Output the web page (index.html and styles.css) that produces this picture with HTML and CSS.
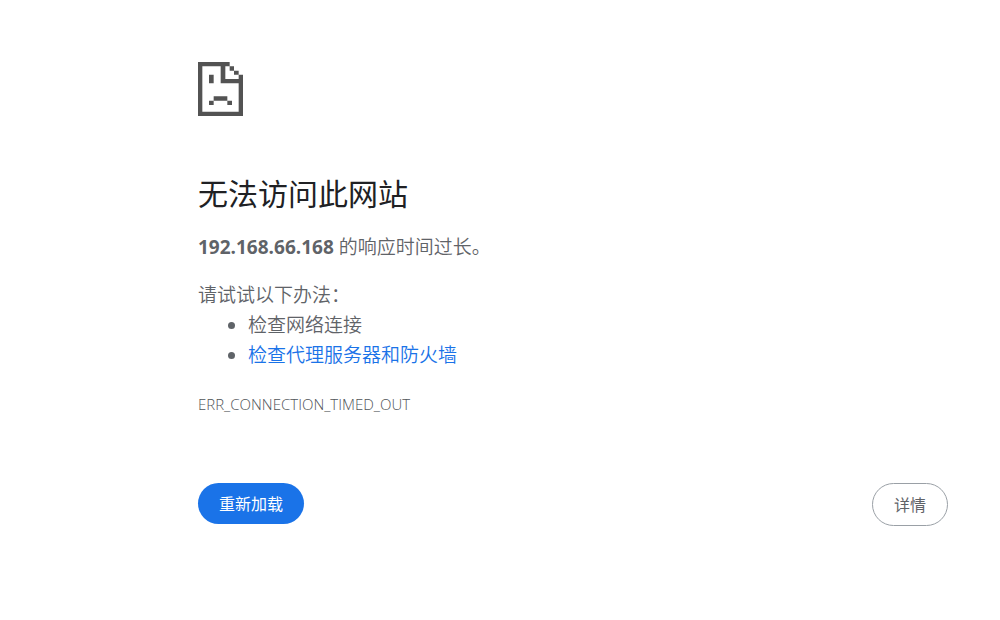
FILE: index.html
```html
<!DOCTYPE html>
<html lang="zh-CN">
<head>
<meta charset="utf-8">
<meta name="viewport" content="width=device-width, initial-scale=1">
<title>192.168.66.168</title>
<link rel="stylesheet" href="styles.css">
</head>
<body>
<main class="error-page">
  <svg class="error-icon" viewBox="0 0 135 162" shape-rendering="geometricPrecision" aria-hidden="true">
    <path fill="#535353" fill-rule="evenodd" d="M0 0H95V13H108V26H122V38H135V162H0ZM13 13V149H122V64H68V13ZM82 13V51H122V38H108V26H95V13Z"/>
    <path fill="#535353" d="M33 38H47V64H33ZM47 103H88V116H47ZM33 116H47V129H33ZM88 116H102V129H88Z"/>
  </svg>
  <h1 class="title">无法访问此网站</h1>
  <p class="summary"><strong>192.168.66.168</strong> 的响应时间过长。</p>
  <section class="suggestions">
    <p class="suggestions-title">请试试以下办法：</p>
    <ul class="suggestions-list">
      <li>检查网络连接</li>
      <li><a class="link" href="#buttons">检查代理服务器和防火墙</a></li>
    </ul>
  </section>
  <p class="error-code">ERR_CONNECTION_TIMED_OUT</p>
  <div class="actions" id="buttons">
    <button class="button button-primary" type="button">重新加载</button>
    <button class="button button-secondary" type="button">详情</button>
  </div>
</main>
</body>
</html>
```
FILE: styles.css
```css
body {
  margin: 0;
  background: #fff;
  color: #5f6368;
  font-family: "Open Sans", "Noto Sans CJK SC", sans-serif;
  font-size: 19px;
  font-weight: 350;
  line-height: 30px;
}

.error-page {
  max-width: 750px;
  margin: 0 52px 0 198px;
  padding: 62px 0 32px;
}

.error-icon {
  display: block;
  width: 45px;
  height: 54px;
}

.title {
  margin: 59px 0 19px;
  color: #202124;
  font-size: 30px;
  font-weight: 400;
  line-height: 38px;
}

.summary {
  margin: 0 0 18px;
}

.summary strong {
  font-weight: 700;
}

.suggestions-title {
  margin: 0;
}

.suggestions-list {
  margin: 0;
  padding: 0 0 0 50px;
}

.link {
  color: #1a73e8;
  text-decoration: none;
}

.error-code {
  margin: 24px 0 0;
  color: #505458;
  font-size: 15px;
  font-weight: 300;
  line-height: 20px;
}

.actions {
  display: flex;
  align-items: flex-start;
  justify-content: space-between;
  margin-top: 69px;
}

.button {
  padding: 11px 21px 9px;
  border: 0;
  border-radius: 22px;
  font: inherit;
  font-size: 16px;
  font-weight: 400;
  line-height: 21px;
  cursor: pointer;
}

.button-primary {
  background: #1a73e8;
  color: #fff;
}

.button-secondary {
  border: 1px solid #9aa0a6;
  background: #fff;
  color: #5f6368;
}
```
